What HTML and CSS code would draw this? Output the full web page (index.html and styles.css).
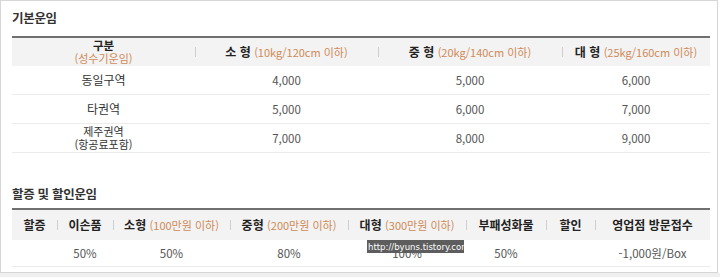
FILE: index.html
```html
<!DOCTYPE html>
<html lang="ko">
<head>
<meta charset="utf-8">
<link rel="stylesheet" href="styles.css">
</head>
<body>
<div class="frame">
  <h2 class="title">기본운임</h2>
  <div class="tbl t1">
    <div class="row head">
      <div class="cell two"><b>구분</b><span class="note">(성수기운임)</span></div>
      <div class="cell sep"><span><b>소 형</b> <span class="note">(10kg/120cm 이하)</span></span></div>
      <div class="cell sep"><span><b>중 형</b> <span class="note">(20kg/140cm 이하)</span></span></div>
      <div class="cell sep"><span><b>대 형</b> <span class="note">(25kg/160cm 이하)</span></span></div>
    </div>
    <div class="row body">
      <div class="cell label">동일구역</div>
      <div class="cell">4,000</div>
      <div class="cell">5,000</div>
      <div class="cell">6,000</div>
    </div>
    <div class="row body">
      <div class="cell label">타권역</div>
      <div class="cell">5,000</div>
      <div class="cell">6,000</div>
      <div class="cell">7,000</div>
    </div>
    <div class="row body">
      <div class="cell label two"><span>제주권역</span><span>(항공료포함)</span></div>
      <div class="cell">7,000</div>
      <div class="cell">8,000</div>
      <div class="cell">9,000</div>
    </div>
  </div>

  <h2 class="title title2">할증 및 할인운임</h2>
  <div class="tbl t2">
    <div class="row head">
      <div class="cell"><b>할증</b></div>
      <div class="cell sep"><b>이손품</b></div>
      <div class="cell sep"><span><b>소형</b> <span class="note">(100만원 이하)</span></span></div>
      <div class="cell sep"><span><b>중형</b> <span class="note">(200만원 이하)</span></span></div>
      <div class="cell sep"><span><b>대형</b> <span class="note">(300만원 이하)</span></span></div>
      <div class="cell sep"><b>부패성화물</b></div>
      <div class="cell sep"><b>할인</b></div>
      <div class="cell sep"><b>영업점 방문접수</b></div>
    </div>
    <div class="row body">
      <div class="cell"></div>
      <div class="cell">50%</div>
      <div class="cell">50%</div>
      <div class="cell">80%</div>
      <div class="cell">100%</div>
      <div class="cell">50%</div>
      <div class="cell"></div>
      <div class="cell">-1,000원/Box</div>
    </div>
  </div>
  <div class="watermark">http://byuns.tistory.cor</div>
</div>
<div class="bottom"></div>
</body>
</html>
```

FILE: styles.css
```css
html, body {
  margin: 0;
  padding: 0;
  background: #ffffff;
}
body {
  width: 720px;
  height: 277px;
  overflow: hidden;
  font-family: "Noto Sans CJK KR", "Noto Sans", sans-serif;
  color: #444;
}
.frame {
  position: relative;
  box-sizing: border-box;
  width: 718px;
  height: 273px;
  border: 1px solid #d6d6d6;
  padding: 9px 7px 0 11px;
}
.bottom {
  height: 4px;
  background: #efefef;
}
.title {
  margin: 0;
  height: 16px;
  line-height: 16px;
  font-size: 12.5px;
  font-weight: bold;
  color: #333;
  letter-spacing: -0.3px;
}
.title2 {
  margin-top: 33px;
}
.tbl {
  border-top: 2px solid #707070;
  margin-top: 10px;
  width: 698px;
}
.t2 {
  margin-top: 6px;
}
.row {
  display: grid;
  border-bottom: 1px solid #ebebeb;
}
.t1 .row {
  grid-template-columns: 183px 183px 184px 148px;
}
.t2 .row {
  grid-template-columns: 45px 56px 117px 118px 118px 80px 49px 115px;
}
.head {
  background: #f3f3f3;
  border-bottom: none;
}
.t1 .head { height: 28px; }
.t1 .body { height: 28px; }
.t2 .head { height: 30px; }
.t2 .body { height: 26px; }
.cell {
  display: flex;
  align-items: center;
  justify-content: center;
  font-size: 11.5px;
  color: #555;
  white-space: nowrap;
  line-height: 14px;
}
.head .cell {
  color: #222;
  font-size: 12px;
}
.head b {
  font-weight: bold;
  color: #222;
}
.note {
  color: #cf8a58;
  font-size: 11px;
  font-weight: normal;
}
.two {
  flex-direction: column;
}
.two > * {
  display: block;
  height: 13px;
  line-height: 13px;
  font-size: 11px;
}
.head .two > b {
  font-size: 11.5px;
}
.label {
  color: #333;
  font-size: 12px;
}
.sep {
  background: linear-gradient(#cfcfcf, #cfcfcf) left center / 1px 10px no-repeat;
}
.watermark {
  position: absolute;
  left: 366px;
  top: 239px;
  width: 97px;
  height: 13px;
  overflow: hidden;
  background: #5d5d5d;
  color: #fff;
  font-family: "DejaVu Sans Condensed", "DejaVu Sans", sans-serif;
  font-size: 9.5px;
  line-height: 13px;
  white-space: nowrap;
  padding-left: 1px;
  box-sizing: border-box;
}
```
